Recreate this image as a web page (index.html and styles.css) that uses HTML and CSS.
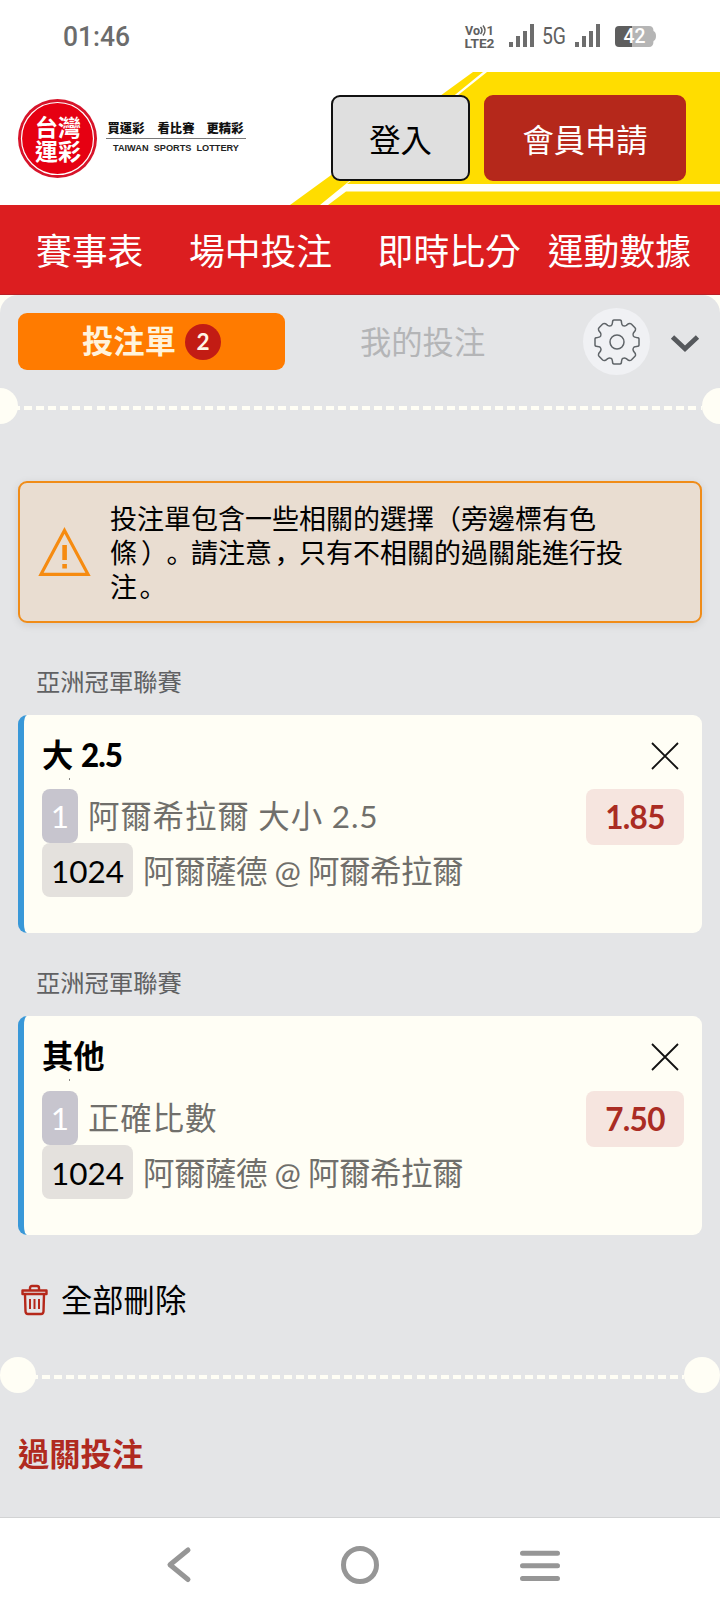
FILE: index.html
```html
<!DOCTYPE html>
<html lang="zh-Hant">
<head>
<meta charset="utf-8">
<title>台灣運彩</title>
<link rel="stylesheet" href="styles.css">
</head>
<body>
<div class="statusbar">
  <svg width="720" height="72" viewBox="0 0 720 72">
    <text class="clock" x="63" y="46" textLength="67" lengthAdjust="spacingAndGlyphs">01:46</text>
    <g class="volte">
      <text x="465" y="35" font-size="13" textLength="15" lengthAdjust="spacingAndGlyphs">Vo</text>
      <path d="M480.500 27q3 3.500 0 7M483 25.500q4 5 0 10" fill="none" stroke="#606060" stroke-width="1.500"/>
      <text x="486.500" y="34.500" font-size="13">1</text>
      <text x="464.500" y="48" font-size="13" textLength="30" lengthAdjust="spacingAndGlyphs">LTE2</text>
    </g>
    <g fill="#6d6d6d">
      <path d="M509 42h4v5h-4zM516 36h4v11h-4zM523 31h4v16h-4zM530 24h4v23h-4z"/>
      <path d="M575 42h4v5h-4zM582 36h4v11h-4zM589 31h4v16h-4zM596 24h4v23h-4z"/>
    </g>
    <text class="net" x="542" y="43.500" textLength="24" lengthAdjust="spacingAndGlyphs">5G</text>
    <path d="M632 26h17q4.500 0 4.500 5q2.500 1 2.500 5t-2.500 5q0 6-4.500 6h-17z" fill="#b5b5b5"/>
    <path d="M632 26h-13q-4 0-4 4v13q0 4 4 4h13z" fill="#5e5e5e"/>
    <text class="level" x="623.500" y="43" textLength="22" lengthAdjust="spacingAndGlyphs">42</text>
  </svg>
</div>

<header class="header">
  <svg class="header-art" width="720" height="133" viewBox="0 72 720 133">
    <path d="M473 72H720V205H290z" fill="#ffdd00"/>
    <path d="M483 72h4L347 184H720v7.500H346L328 205h-8z" fill="#fffff8"/>
  </svg>
  <svg class="logo" width="232" height="84" viewBox="16 96 232 84">
    <circle cx="57.500" cy="138.500" r="39.500" fill="#d7142a"/>
    <circle cx="57.500" cy="138.500" r="36" fill="#e60012" stroke="#fff" stroke-width="1.200"/>
    <g class="logo-seal">
      <text x="35" y="135.500" textLength="46">台灣</text>
      <text x="35" y="159.500" textLength="46">運彩</text>
    </g>
    <g class="logo-tag">
      <text x="107.500" y="132.500" textLength="37">買運彩</text>
      <text x="157.500" y="132.500" textLength="37">看比賽</text>
      <text x="206.500" y="132.500" textLength="37">更精彩</text>
    </g>
    <path d="M106 138.500h140" stroke="#777" stroke-width="1"/>
    <text class="logo-en" x="113" y="151" textLength="126" lengthAdjust="spacingAndGlyphs">TAIWAN&#160; SPORTS&#160; LOTTERY</text>
  </svg>
  <div class="actions">
    <button class="btn btn-login">登入</button>
    <button class="btn btn-join">會員申請</button>
  </div>
</header>

<nav class="mainnav">
  <a>賽事表</a><a>場中投注</a><a>即時比分</a><a>運動數據</a>
</nav>

<main class="slip-wrap">
  <section class="slip">
    <div class="tabs">
      <div class="tab tab-active">投注單<span class="count">2</span></div>
      <div class="tab tab-mine">我的投注</div>
      <div class="gear">
        <svg width="46" height="46" viewBox="-23 -23 46 46" fill="none" stroke="#5f6468" stroke-width="1.500" stroke-linejoin="round">
          <path d="M-3 -22H3Q4.500 -22 4.500 -19.500Q4.700 -16.800 6 -16.300Q7.500 -15.500 9.300 -16.600L11.500 -18.300Q13.200 -19 14.300 -18L18 -14.300Q19 -13.200 18.300 -11.500L16.600 -9.300Q15.500 -7.500 16.300 -6Q16.800 -4.700 19.500 -4.500Q22 -4.500 22 -3V3Q22 4.500 19.500 4.500Q16.800 4.700 16.300 6Q15.500 7.500 16.600 9.300L18.300 11.500Q19 13.200 18 14.300L14.300 18Q13.200 19 11.500 18.300L9.300 16.600Q7.500 15.500 6 16.300Q4.700 16.800 4.500 19.500Q4.500 22 3 22H-3Q-4.500 22 -4.500 19.500Q-4.700 16.800 -6 16.300Q-7.500 15.500 -9.300 16.600L-11.500 18.300Q-13.200 19 -14.300 18L-18 14.300Q-19 13.200 -18.300 11.500L-16.600 9.300Q-15.500 7.500 -16.300 6Q-16.800 4.700 -19.500 4.500Q-22 4.500 -22 3V-3Q-22 -4.500 -19.500 -4.500Q-16.800 -4.700 -16.300 -6Q-15.500 -7.500 -16.600 -9.300L-18.300 -11.500Q-19 -13.200 -18 -14.300L-14.300 -18Q-13.200 -19 -11.500 -18.300L-9.300 -16.600Q-7.500 -15.500 -6 -16.300Q-4.700 -16.800 -4.500 -19.500Q-4.500 -22 -3 -22z"/>
          <circle r="7"/>
        </svg>
      </div>
      <svg class="chevron" width="30" height="18" viewBox="0 0 30 18" fill="none" stroke="#55585c" stroke-width="4.800"><path d="M2.500 2L15 13.800L27.500 2"/></svg>
    </div>

    <div class="tear tear-top"><i class="hole"></i><i class="dash"></i><i class="hole"></i></div>

    <div class="notice">
      <svg width="56" height="52" viewBox="0 0 56 52"><path d="M27.500 4.500L51 48.300H4z" fill="none" stroke="#f68b10" stroke-width="3.200"/><path d="M25.300 19h4.600v15h-4.600zM25.300 38h4.600v4.500h-4.600z" fill="#f68b10"/></svg>
      <p>投注單包含一些相關的選擇（旁邊標有色<br>條<span class="paren">）</span><span class="stop">。</span>請注意<span class="stop">，</span>只有不相關的過關能進行投<br>注<span class="stop">。</span></p>
    </div>

    <h2 class="league">亞洲冠軍聯賽</h2>
    <article class="bet">
      <div class="bet-head"><h3>大 <b>2.5</b></h3>
        <svg width="28" height="28" viewBox="0 0 28 28" stroke="#111" stroke-width="1.800"><path d="M1 1l26 26M27 1L1 27"/></svg>
      </div>
      <div class="bet-row row-market"><span class="chip chip-one">1</span><span class="market">阿爾希拉爾 大小 2.5</span><span class="odds">1.85</span></div>
      <div class="bet-row"><span class="chip chip-id">1024</span><span class="match">阿爾薩德 @ 阿爾希拉爾</span></div>
    </article>

    <h2 class="league league-next">亞洲冠軍聯賽</h2>
    <article class="bet bet-second">
      <div class="bet-head"><h3>其他</h3>
        <svg width="28" height="28" viewBox="0 0 28 28" stroke="#111" stroke-width="1.800"><path d="M1 1l26 26M27 1L1 27"/></svg>
      </div>
      <div class="bet-row row-market"><span class="chip chip-one">1</span><span class="market">正確比數</span><span class="odds">7.50</span></div>
      <div class="bet-row"><span class="chip chip-id">1024</span><span class="match">阿爾薩德 @ 阿爾希拉爾</span></div>
    </article>

    <div class="clear">
      <svg width="28" height="32" viewBox="0 0 28 32" fill="none" stroke="#b5281b" stroke-width="2.400" stroke-linejoin="round">
        <path d="M1.500 6.500h24v3.500h-24zM9 6V4q0-2 2-2h5q2 0 2 2v2M4 10.500l.5 17q.2 2.500 2.500 2.500h13q2.300 0 2.500-2.500l.5-17"/><path d="M9 15v10M13.500 15v10M18 15v10" stroke-width="2"/>
      </svg>
      <span>全部刪除</span>
    </div>

    <div class="tear tear-bottom"><i class="hole"></i><i class="dash"></i><i class="hole"></i></div>

    <h2 class="parlay">過關投注</h2>
  </section>
</main>

<footer class="sysnav">
  <svg width="720" height="94" viewBox="0 1518 720 94" fill="none" stroke="#969696" stroke-width="5" stroke-linecap="round" stroke-linejoin="round">
    <path d="M188 1550L170 1564.800L188 1579.500"/>
    <circle cx="360" cy="1565" r="16.500"/>
    <path d="M522.500 1553.300h35M522.500 1565.700h35M522.500 1578.500h35"/>
  </svg>
</footer>
</body>
</html>
```
FILE: styles.css
```css
* { box-sizing: border-box; margin: 0; padding: 0; }
body {
  width: 720px;
  height: 1612px;
  overflow: hidden;
  display: flex;
  flex-direction: column;
  background: #fff;
  font-family: Lato, "Noto Sans CJK TC", sans-serif;
  font-size: 31.5px;
}
svg { display: block; flex: none; }

.statusbar { height: 72px; flex: none; }
.clock { font: 500 28px Roboto, sans-serif; fill: #6c6c6c; }
.volte { font-family: Roboto, sans-serif; font-weight: 700; fill: #606060; }
.net { font: 400 23px Roboto, sans-serif; fill: #606060; }
.level { font: 500 20px Roboto, sans-serif; fill: #fff; }

.header { position: relative; display: flex; height: 133px; flex: none; padding: 23px 34px 0 16px; justify-content: space-between; }
.header-art { position: absolute; inset: 0; }
.logo { position: relative; margin-top: 1px; }
.logo-seal { font: 700 23px "Noto Sans CJK TC", sans-serif; fill: #fff; }
.logo-tag { font: 900 12.3px "Noto Sans CJK TC", sans-serif; fill: #111; }
.logo-en { font: 700 9.5px "Liberation Sans", sans-serif; fill: #222; }
.actions { position: relative; display: flex; gap: 14px; height: 86px; }
.btn { font-family: inherit; font-size: 31.3px; line-height: 78px; border-radius: 9px; text-align: center; padding: 4px 0 0; border: 2px solid; height: 86px; }
.btn-login { width: 139px; background: #dfdfdf; border-color: #111; color: #000; }
.btn-join { width: 202px; background: #b5281b; border-color: #b5281b; color: #fff; }

.mainnav { display: flex; height: 90px; flex: none; padding-left: 36px; background: #dc1e20; border-bottom: 1px solid #b92127; color: #fff; font-size: 35.8px; line-height: 93px; }
.mainnav a { margin-right: 45.5px; white-space: nowrap; }
.mainnav a:nth-child(3) { margin-right: 27px; }

.slip-wrap { height: 1223px; flex: none; background: #fffef5; }
.slip { height: 100%; overflow: hidden; padding-top: 13px; background: #e4e5e7; border-radius: 18px 18px 0 0; border-bottom: 1px solid #d2d3d4; }
.tabs { display: flex; align-items: center; height: 67px; padding-left: 18px; }
.tab { height: 57px; line-height: 59px; font-size: 31.3px; }
.tab-active { display: flex; align-items: center; justify-content: center; gap: 9px; width: 267px; border-radius: 9px; background: #ff7b00; color: #fff3dc; font-weight: 700; }
.count { width: 36px; height: 36px; border-radius: 50%; background: #c21c14; color: #fff5e5; font-size: 22.5px; line-height: 36px; text-align: center; }
.tab-mine { width: 298px; padding-left: 75px; color: #b4b5b7; }
.gear { display: grid; place-items: center; width: 67px; height: 67px; flex: none; border-radius: 50%; background: #f0f1f4; }
.chevron { margin-left: 20px; margin-top: 4px; }

.tear { display: flex; align-items: center; height: 36px; }
.hole { width: 36px; height: 36px; flex: none; border-radius: 50%; background: #fffef5; }
.dash { flex: 1; height: 4px; background: repeating-linear-gradient(90deg, #fffef5 0 8px, transparent 8px 12.08px); }
.tear-top { margin: 13px -18px 0; }
.tear-top .dash { margin: 4px 0 0 -6px; }
.tear-bottom .dash { margin: 4px 0 0 -6px; }

.notice { display: flex; align-items: center; height: 142px; margin: 57px 18px 0; padding: 0 16px 0 17px; border: 2px solid #f08c18; border-radius: 9px; background: #e9ddd1; box-shadow: 0 2px 8px rgba(0,0,0,.1); }
.notice p { margin: 2px 0 0 17px; color: #000; font-size: 27px; line-height: 34px; white-space: nowrap; text-spacing-trim: space-all; }
.stop, .paren { display: inline-block; width: 27px; line-height: 30px; font-family: "Noto Sans CJK SC", sans-serif; }
.stop { padding-left: 2.5px; }
.paren { padding-left: 4px; }

.league { height: 36px; margin: 41px 0 0 36px; color: #606163; font-size: 24.3px; line-height: 36px; font-weight: 400; }
.league-next { margin-top: 32px; }

.bet { position: relative; height: 218px; margin: 15px 18px 0; padding: 0 18px; border-left: 6px solid #3998d8; border-radius: 9px; background: #fffef5; }
.bet::before { content: ""; position: absolute; left: 45px; top: 63px; width: 1px; height: 2px; background: #8d8c88; }
.bet-head { display: flex; justify-content: space-between; height: 74px; padding: 27px 5px 0 0; }
.bet-head h3 { margin-top: -1px; font-size: 31.3px; font-weight: 700; line-height: 28px; }
.bet-head b { letter-spacing: -.9px; }
.bet-row { display: flex; height: 54px; line-height: 56px; color: #706f6b; white-space: nowrap; }
.row-market { line-height: 55px; }
.chip { border-radius: 8px; }
.chip-one { width: 36px; margin-right: 10px; background: #c7c5ce; color: #fff; text-align: center; }
.chip-id { width: 91px; margin-right: 10px; background: #e4e1dd; color: #000; text-align: center; }
.market { letter-spacing: .8px; }
.match { letter-spacing: -.5px; }
.odds { width: 98px; height: 56px; margin-left: auto; border-radius: 8px; background: #f6e5df; color: #aa2c23; font-weight: 700; letter-spacing: -.7px; line-height: 57px; text-align: center; }
.bet-second { height: 219px; }
.bet-second .bet-head { height: 75px; }

.clear { display: flex; align-items: center; height: 44px; margin: 43px 0 0 21px; gap: 12px; color: #000; font-size: 31.3px; line-height: 44px; }
.tear-bottom { margin-top: 35px; }
.parlay { height: 44px; margin: 39px 0 0 18px; color: #b02a20; font-size: 31.3px; line-height: 44px; }

.sysnav { height: 94px; flex: none; background: #fff; }
```
